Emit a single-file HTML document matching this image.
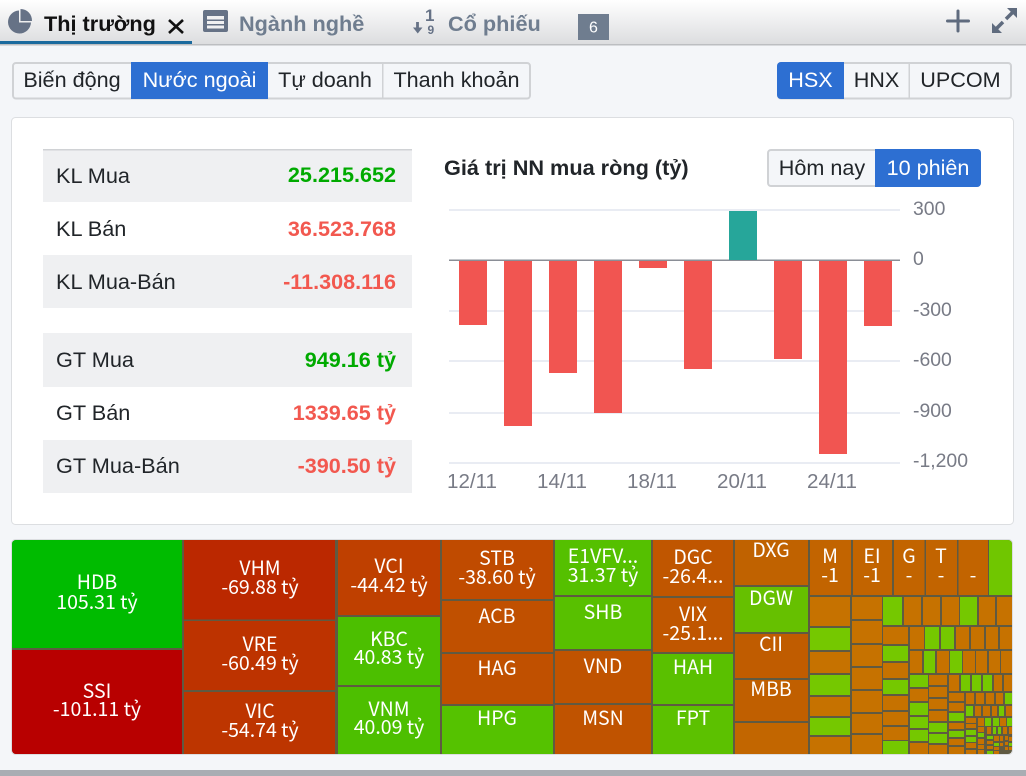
<!DOCTYPE html>
<html lang="vi"><head><meta charset="utf-8"><title>Thị trường</title>
<style>
html,body{margin:0;padding:0;background:#f4f6f9;width:1026px;height:776px;overflow:hidden}
svg{display:block;position:absolute;left:0;top:0}
text{font-family:"Liberation Sans",sans-serif;white-space:pre}
.b{font-size:21.6px;fill:#212529;text-anchor:middle}
.w{fill:#fff}
.l{font-size:21.7px;fill:#212529}
.v{font-size:21.6px;font-weight:bold;text-anchor:end}
.ax{font-size:19.4px;fill:#787b86}
.axx{font-size:20.6px;fill:#787b86;text-anchor:middle}
.tm text{font-family:"Noto Sans CJK SC","DejaVu Sans",sans-serif;font-size:19.5px;fill:#fff;text-anchor:middle}
.tb{font-size:21.7px;font-weight:bold;fill:#6f7d8f}
</style></head><body>
<svg width="1026" height="776" viewBox="0 0 1026 776" xmlns="http://www.w3.org/2000/svg">
<defs>
<linearGradient id="hd" x1="0" y1="0" x2="0" y2="1"><stop offset="0" stop-color="#ffffff"/><stop offset="1" stop-color="#dcdddf"/></linearGradient>
<clipPath id="tc"><rect x="12" y="540" width="1000" height="214" rx="4"/></clipPath>
</defs>
<rect width="1026" height="776" fill="#f4f6f9"/>
<rect width="1026" height="44" fill="url(#hd)"/>
<rect y="44" width="1026" height="1.5" fill="#bcbec1"/>
<rect y="41" width="192" height="3" fill="#1a6a9e"/>
<!-- pie -->
<path d="M19 10.500A11.500 11.500 0 1 0 31 22.500H19Z" fill="#667286"/>
<path d="M20.500 9A11.500 11.500 0 0 1 32 21H20.500Z" fill="#667286"/>
<text x="44" y="31" font-size="21.7" font-weight="bold" fill="#111">Thị trường</text>
<path d="M169 20L183 33M183 20L169 33" stroke="#111" stroke-width="2.6" fill="none"/>
<!-- table icon -->
<rect x="203" y="10" width="25" height="22" rx="2" fill="#667286"/>
<path d="M207 16h17v3.500h-17zM207 21h17v3h-17zM207 25.500h17v3h-17z" fill="#f0f0f1"/>
<text x="239" y="31" class="tb">Ngành nghề</text>
<!-- sort icon -->
<path d="M417.500 22v8" stroke="#667286" stroke-width="2.800" fill="none"/>
<path d="M413 27.500h9.500l-4.750 6z" fill="#667286"/>
<text x="425" y="21" font-size="17" font-weight="bold" fill="#667286">1</text>
<text x="427.500" y="34" font-size="12" font-weight="bold" fill="#667286">9</text>
<text x="448" y="31" class="tb">Cổ phiếu</text>
<rect x="578" y="14" width="31" height="26" fill="#6f7d8f"/>
<text x="593.500" y="32.500" font-size="16" fill="#fff" text-anchor="middle">6</text>
<!-- plus -->
<path d="M958 11v20M947.500 21h21" stroke="#5f6b7e" stroke-width="3" stroke-linecap="round" fill="none"/>
<!-- expand -->
<path d="M1006 19L1015 10" stroke="#5f6b7e" stroke-width="3.500" fill="none"/>
<path d="M1017 8v10l-10-10z" fill="#5f6b7e"/>
<path d="M1003 22L994 31" stroke="#5f6b7e" stroke-width="3.500" fill="none"/>
<path d="M992 33v-10l10 10z" fill="#5f6b7e"/>

<!-- button groups -->
<rect x="13" y="63" width="517" height="35.500" rx="3" fill="#f4f6f9" stroke="#d0d2d5" stroke-width="2"/>
<rect x="131" y="62" width="137" height="37" fill="#2d6fd2"/>
<rect x="382" y="63" width="1.500" height="36" fill="#d0d2d5"/>
<text class="b" x="72" y="87">Biến động</text>
<text class="b w" x="199.500" y="87">Nước ngoài</text>
<text class="b" x="325" y="87">Tự doanh</text>
<text class="b" x="456.500" y="87">Thanh khoản</text>

<rect x="778" y="63" width="233" height="35.500" rx="3" fill="#f4f6f9" stroke="#d0d2d5" stroke-width="2"/>
<path d="M844 62H781a4 4 0 0 0-4 4v29a4 4 0 0 0 4 4h63z" fill="#2d6fd2"/>
<rect x="908.500" y="63" width="1.500" height="36" fill="#d0d2d5"/>
<text class="b w" x="810.500" y="87">HSX</text>
<text class="b" x="876.500" y="87">HNX</text>
<text class="b" x="960.500" y="87">UPCOM</text>

<!-- card -->
<rect x="11.500" y="117.500" width="1002" height="407" rx="4" fill="#fff" stroke="#dcdee1"/>
<rect x="43" y="150" width="369" height="52" fill="#eff0f2"/>
<rect x="43" y="149" width="369" height="1.500" fill="#d0d2d5"/>
<rect x="43" y="255" width="369" height="53" fill="#eff0f2"/>
<rect x="43" y="333" width="369" height="54" fill="#eff0f2"/>
<rect x="43" y="440" width="369" height="53" fill="#eff0f2"/>
<text class="l" x="56" y="183">KL Mua</text>
<text class="l" x="56" y="236">KL Bán</text>
<text class="l" x="56" y="289">KL Mua-Bán</text>
<text class="l" x="56" y="367">GT Mua</text>
<text class="l" x="56" y="420">GT Bán</text>
<text class="l" x="56" y="473">GT Mua-Bán</text>
<text class="v" x="396" y="182" fill="#00aa00">25.215.652</text>
<text class="v" x="396" y="236" fill="#f2584f">36.523.768</text>
<text class="v" x="396" y="289" fill="#f2584f">-11.308.116</text>
<text class="v" x="396" y="367" fill="#00aa00">949.16 tỷ</text>
<text class="v" x="396" y="420" fill="#f2584f">1339.65 tỷ</text>
<text class="v" x="396" y="473" fill="#f2584f">-390.50 tỷ</text>

<!-- chart -->
<text x="444" y="175" font-size="21.7" font-weight="bold" fill="#212529">Giá trị NN mua ròng (tỷ)</text>
<rect x="768" y="150" width="212" height="36" rx="3" fill="#f4f6f9" stroke="#d0d2d5" stroke-width="2"/>
<path d="M875 149h102a4 4 0 0 1 4 4v30a4 4 0 0 1-4 4h-102z" fill="#2d6fd2"/>
<text class="b" x="822" y="175">Hôm nay</text>
<text class="b w" x="928" y="175">10 phiên</text>
<g fill="#e9ecf3">
<rect x="449" y="209" width="451" height="2"/>
<rect x="449" y="310" width="451" height="2"/>
<rect x="449" y="360" width="451" height="2"/>
<rect x="449" y="412" width="451" height="2"/>
<rect x="449" y="462" width="451" height="2"/>
</g>
<rect x="449" y="259.500" width="451" height="1.500" fill="#8a8e96"/>
<g fill="#f15551">
<rect x="459" y="261" width="28" height="64"/>
<rect x="504" y="261" width="28" height="165"/>
<rect x="549" y="261" width="28" height="112"/>
<rect x="594" y="261" width="28" height="152"/>
<rect x="639" y="261" width="28" height="7"/>
<rect x="684" y="261" width="28" height="108"/>
<rect x="774" y="261" width="28" height="98"/>
<rect x="819" y="261" width="28" height="193"/>
<rect x="864" y="261" width="28" height="65"/>
</g>
<rect x="729" y="211" width="28" height="49" fill="#26a69a"/>
<text class="ax" x="913" y="215">300</text>
<text class="ax" x="913" y="265">0</text>
<text class="ax" x="913" y="316">-300</text>
<text class="ax" x="913" y="366">-600</text>
<text class="ax" x="913" y="417">-900</text>
<text class="ax" x="913" y="467">-1,200</text>
<text class="axx" x="472" y="488">12/11</text>
<text class="axx" x="562" y="488">14/11</text>
<text class="axx" x="652" y="488">18/11</text>
<text class="axx" x="742" y="488">20/11</text>
<text class="axx" x="832" y="488">24/11</text>

<!-- treemap -->
<rect x="11.500" y="539.500" width="1001" height="215" rx="4" fill="none" stroke="#dcdee1"/>
<g clip-path="url(#tc)">
<rect x="12" y="540" width="1000" height="214" fill="#5f5a42"/>
<rect x="12" y="540" width="170" height="108" fill="#00bb00"/>
<rect x="12" y="650" width="170" height="104" fill="#b80000"/>
<rect x="184" y="540" width="151" height="79.500" fill="#bb2800"/>
<rect x="184" y="621" width="151" height="69" fill="#bd3300"/>
<rect x="184" y="692" width="151" height="62" fill="#bd3500"/>
<rect x="338" y="540" width="102" height="75" fill="#bf4000"/>
<rect x="338" y="617" width="102" height="68" fill="#4cbf00"/>
<rect x="338" y="687" width="102" height="67" fill="#4dbf00"/>
<rect x="442" y="540" width="111" height="59" fill="#c04b00"/>
<rect x="442" y="601" width="111" height="51" fill="#c05000"/>
<rect x="442" y="654" width="111" height="50" fill="#c05000"/>
<rect x="442" y="706" width="111" height="48" fill="#55c200"/>
<rect x="555" y="540" width="96" height="55" fill="#55c000"/>
<rect x="555" y="597" width="96" height="52" fill="#58c000"/>
<rect x="555" y="651" width="96" height="52" fill="#c05300"/>
<rect x="555" y="705" width="96" height="49" fill="#c05300"/>
<rect x="653" y="540" width="80" height="56" fill="#c05600"/>
<rect x="653" y="598" width="80" height="54" fill="#c05600"/>
<rect x="653" y="654" width="80" height="50" fill="#5ac000"/>
<rect x="653" y="706" width="80" height="48" fill="#5cc100"/>
<rect x="735" y="540" width="73" height="45" fill="#c06200"/>
<rect x="735" y="587" width="73" height="45" fill="#66c000"/>
<rect x="735" y="634" width="73" height="44" fill="#c05c00"/>
<rect x="735" y="680" width="73" height="41" fill="#c05f00"/>
<rect x="735" y="723" width="73" height="31" fill="#c26600"/>
<g fill="#c26400">
<rect x="810" y="540" width="41" height="55"/>
<rect x="853" y="540" width="39" height="55"/>
<rect x="894" y="540" width="30.500" height="55"/>
<rect x="926" y="540" width="31" height="55"/>
<rect x="958.500" y="540" width="29.500" height="55"/>
</g>
<rect x="989" y="540" width="23" height="55" fill="#70c600"/>
<path fill="#c67200" d="M810 597h40v29h-40zM810 652h40v21h-40zM810 697h40v19h-40zM810 737h40v17h-40zM852 597h30v22h-30zM852 621h30v22h-30zM852 645h30v21h-30zM852 668h30v21h-30zM852 691h30v21h-30zM852 714h30v19h-30zM852 735h30v19h-30zM904 597h17v28h-17zM923 597h17v28h-17zM942 597h17v28h-17zM979 597h16v28h-16zM997 597h15v28h-15zM883 627h25v17h-25zM883 663h25v15h-25zM883 696h25v14h-25zM883 712h25v13h-25zM883 727h25v13h-25zM910 627h14v22h-14zM956 627h13v22h-13zM971 627h13v22h-13zM986 627h12v22h-12zM1000 627h12v22h-12zM910 651h12v22h-12zM937 651h12v22h-12zM963 651h12v22h-12zM976 651h11v22h-11zM989 651h11v22h-11zM1001 651h11v22h-11zM910 689h18v12h-18zM910 743h18v11h-18zM929 675h18v10h-18zM929 687h18v10h-18zM929 699h18v10h-18zM929 711h18v10h-18zM929 745h18v9h-18zM949 675h10v16h-10zM994 675h8v16h-8zM1004 675h8v16h-8zM949 693h15v8h-15zM949 703h15v8h-15zM949 723h15v6h-15zM949 739h15v6h-15zM949 747h15v7h-15zM966 693h8v11h-8zM976 693h8v11h-8zM986 693h8v11h-8zM996 693h7v11h-7zM975 706h6v10h-6zM983 706h7v10h-7zM992 706h5v10h-5zM1006 706h6v10h-6zM966 718h10v5h-10zM966 724h10v4h-10zM966 743h10v5h-10zM966 750h10v4h-10zM978 718h6v8h-6zM978 727h6v5h-6zM978 739h6v5h-6zM978 745h6v4h-6zM978 750h6v4h-6zM1000 718h6v8h-6zM987 727h4v7h-4zM1003 727h4v7h-4zM1009 727h3v7h-3zM987 741h6v3h-6zM987 746h6v3h-6zM994 736h5v5h-5zM994 747h5v3h-5zM994 751h5v3h-5zM1000 736h3v5h-3zM1000 743h3v3h-3zM1005 736h3v4h-3zM1005 742h3v3h-3zM1005 747h3v3h-3zM1009 737h3v4h-3zM1009 747h3v3h-3z"/>
<path fill="#75c800" d="M810 628h40v22h-40zM810 675h40v20h-40zM810 718h40v17h-40zM883 597h19v28h-19zM960 597h17v28h-17zM883 646h25v15h-25zM883 680h25v14h-25zM883 741h25v13h-25zM925 627h14v22h-14zM941 627h13v22h-13zM924 651h11v22h-11zM950 651h12v22h-12zM910 675h18v12h-18zM910 703h18v12h-18zM910 717h18v11h-18zM910 730h18v11h-18zM929 723h18v9h-18zM929 734h18v9h-18zM961 675h9v16h-9zM972 675h9v16h-9zM983 675h9v16h-9zM949 713h15v8h-15zM949 731h15v6h-15zM1005 693h7v11h-7zM966 706h7v10h-7zM999 706h5v10h-5zM966 730h10v5h-10zM966 737h10v5h-10zM978 733h6v4h-6zM985 718h6v8h-6zM993 718h6v8h-6zM1007 718h5v8h-5zM993 727h3v7h-3zM998 727h3v7h-3zM987 736h6v3h-6zM987 751h6v3h-6zM994 743h5v3h-5zM1009 743h3v3h-3z"/>
</g>
<g class="tm">
<text x="97" y="589">HDB</text><text x="97" y="609">105.31 tỷ</text>
<text x="97" y="698">SSI</text><text x="97" y="716">-101.11 tỷ</text>
<text x="260" y="575">VHM</text><text x="260" y="594">-69.88 tỷ</text>
<text x="260" y="651">VRE</text><text x="260" y="670">-60.49 tỷ</text>
<text x="260" y="718">VIC</text><text x="260" y="737">-54.74 tỷ</text>
<text x="389" y="573">VCI</text><text x="389" y="592">-44.42 tỷ</text>
<text x="389" y="646">KBC</text><text x="389" y="664">40.83 tỷ</text>
<text x="389" y="716">VNM</text><text x="389" y="734">40.09 tỷ</text>
<text x="497" y="565">STB</text><text x="497" y="584">-38.60 tỷ</text>
<text x="497" y="623">ACB</text>
<text x="497" y="675">HAG</text>
<text x="497" y="725">HPG</text>
<text x="603" y="563">E1VFV...</text><text x="603" y="582">31.37 tỷ</text>
<text x="603" y="619">SHB</text>
<text x="603" y="673">VND</text>
<text x="603" y="725">MSN</text>
<text x="693" y="564">DGC</text><text x="693" y="583">-26.4...</text>
<text x="693" y="621">VIX</text><text x="693" y="640">-25.1...</text>
<text x="693" y="674">HAH</text>
<text x="693" y="725">FPT</text>
<text x="771" y="557">DXG</text>
<text x="771" y="605">DGW</text>
<text x="771" y="651">CII</text>
<text x="771" y="696">MBB</text>
<text x="830" y="563">M</text><text x="830" y="582">-1</text>
<text x="872" y="563">EI</text><text x="872" y="582">-1</text>
<text x="909" y="563">G</text><text x="909" y="582">-</text>
<text x="941" y="563">T</text><text x="941" y="582">-</text>
<text x="973" y="582">-</text>
</g>
<rect y="770" width="1026" height="6" fill="#a9adb3"/>
</svg>
</body></html>
